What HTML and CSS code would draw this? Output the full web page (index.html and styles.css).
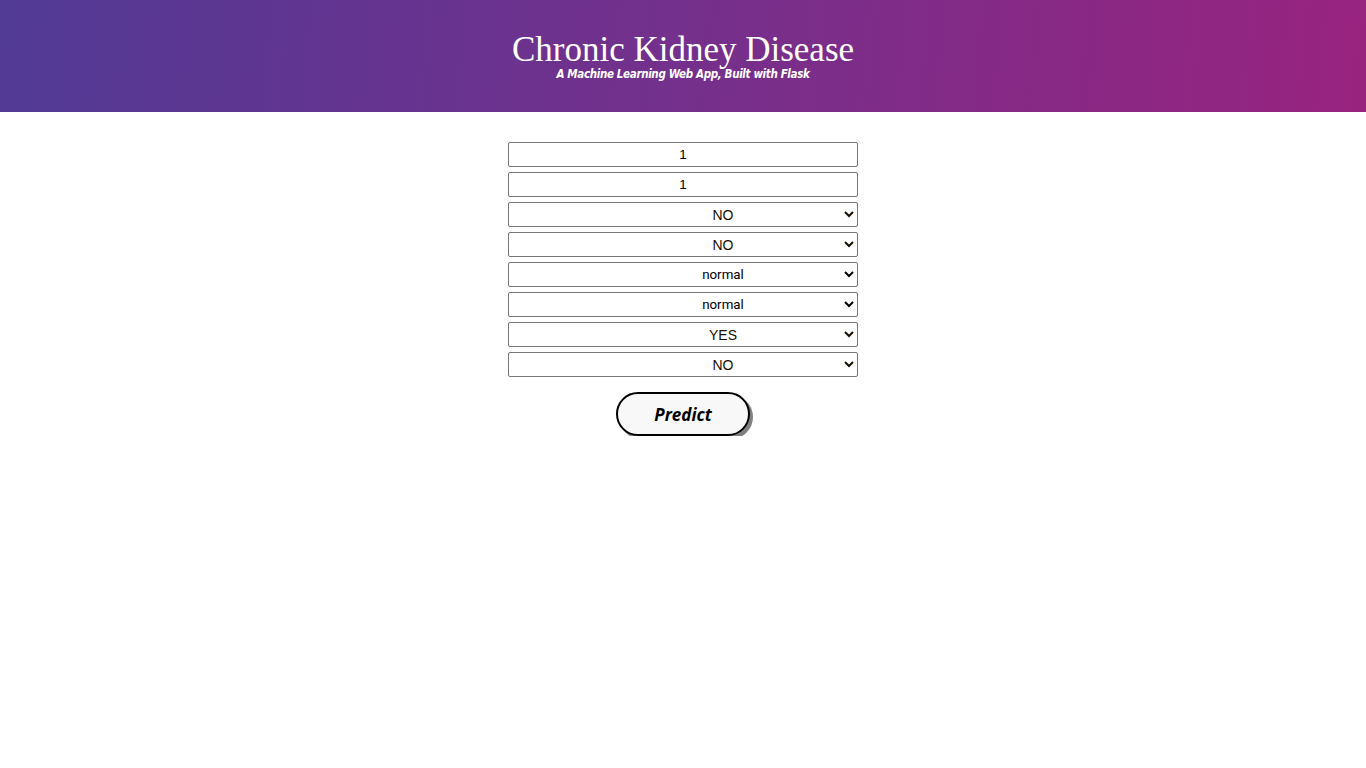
FILE: index.html
```html
<!DOCTYPE html>
<html>
<head>
<meta charset="utf-8">
<title>Chronic Kidney Disease</title>
<link rel="stylesheet" href="styles.css">
</head>
<body>
<header class="hero">
  <h1 class="title">Chronic Kidney Disease</h1>
  <p class="subtitle">A Machine Learning Web App, Built with Flask</p>
</header>
<main class="content">
  <form class="form">
    <input class="field" type="text" value="1">
    <input class="field" type="text" value="1">
    <select class="field choice"><option>NO</option><option>YES</option></select>
    <select class="field choice"><option>NO</option><option>YES</option></select>
    <select class="field choice choice-alt"><option>normal</option><option>abnormal</option></select>
    <select class="field choice choice-alt"><option>normal</option><option>abnormal</option></select>
    <select class="field choice"><option>YES</option><option>NO</option></select>
    <select class="field choice"><option>NO</option><option>YES</option></select>
    <button class="predict" type="button">Predict</button>
  </form>
</main>
</body>
</html>
```
FILE: styles.css
```css
html, body {
  margin: 0;
  padding: 0;
  background: #ffffff;
}
.hero {
  height: 112px;
  box-sizing: border-box;
  padding-top: 31px;
  background: linear-gradient(96deg, #513a95 0%, #74308c 50%, #98237f 100%);
  text-align: center;
  color: #ffffff;
}
.title {
  margin: 0;
  font-family: "Liberation Serif", "Times New Roman", serif;
  font-weight: normal;
  font-size: 35px;
  line-height: 37px;
}
.subtitle {
  margin: -1px 0 0 0;
  font-family: "DejaVu Sans Condensed", "DejaVu Sans", sans-serif;
  font-weight: bold;
  font-style: italic;
  font-size: 11.5px;
  line-height: 14px;
  letter-spacing: -0.35px;
}
.content {
  padding-top: 30px;
  display: flex;
  justify-content: center;
}
.form {
  width: 350px;
  display: flex;
  flex-direction: column;
  align-items: center;
  gap: 5px;
}
.field {
  width: 350px;
  height: 25px;
  box-sizing: border-box;
  margin: 0;
  border: 1px solid #767676;
  border-radius: 2px;
  background: #ffffff;
  color: #000000;
  font-family: "Liberation Sans", Arial, sans-serif;
  font-size: 13.33px;
  text-align: center;
  text-align-last: center;
}
.choice {
  padding-left: 92px;
  font-size: 14px;
  color: #1a1000;
}
.choice-alt {
  font-family: Roboto, "Liberation Sans", sans-serif;
  font-size: 13.33px;
  color: #000000;
}
.predict {
  margin-top: 10px;
  width: 134px;
  height: 44px;
  box-sizing: border-box;
  border: 2px solid #000000;
  border-radius: 22px;
  background: #f8f8f8;
  box-shadow: 3px 3px 0 #808080;
  font-family: "Open Sans", sans-serif;
  font-weight: bold;
  font-style: italic;
  font-size: 17px;
  color: #000000;
  padding: 0;
}
```
